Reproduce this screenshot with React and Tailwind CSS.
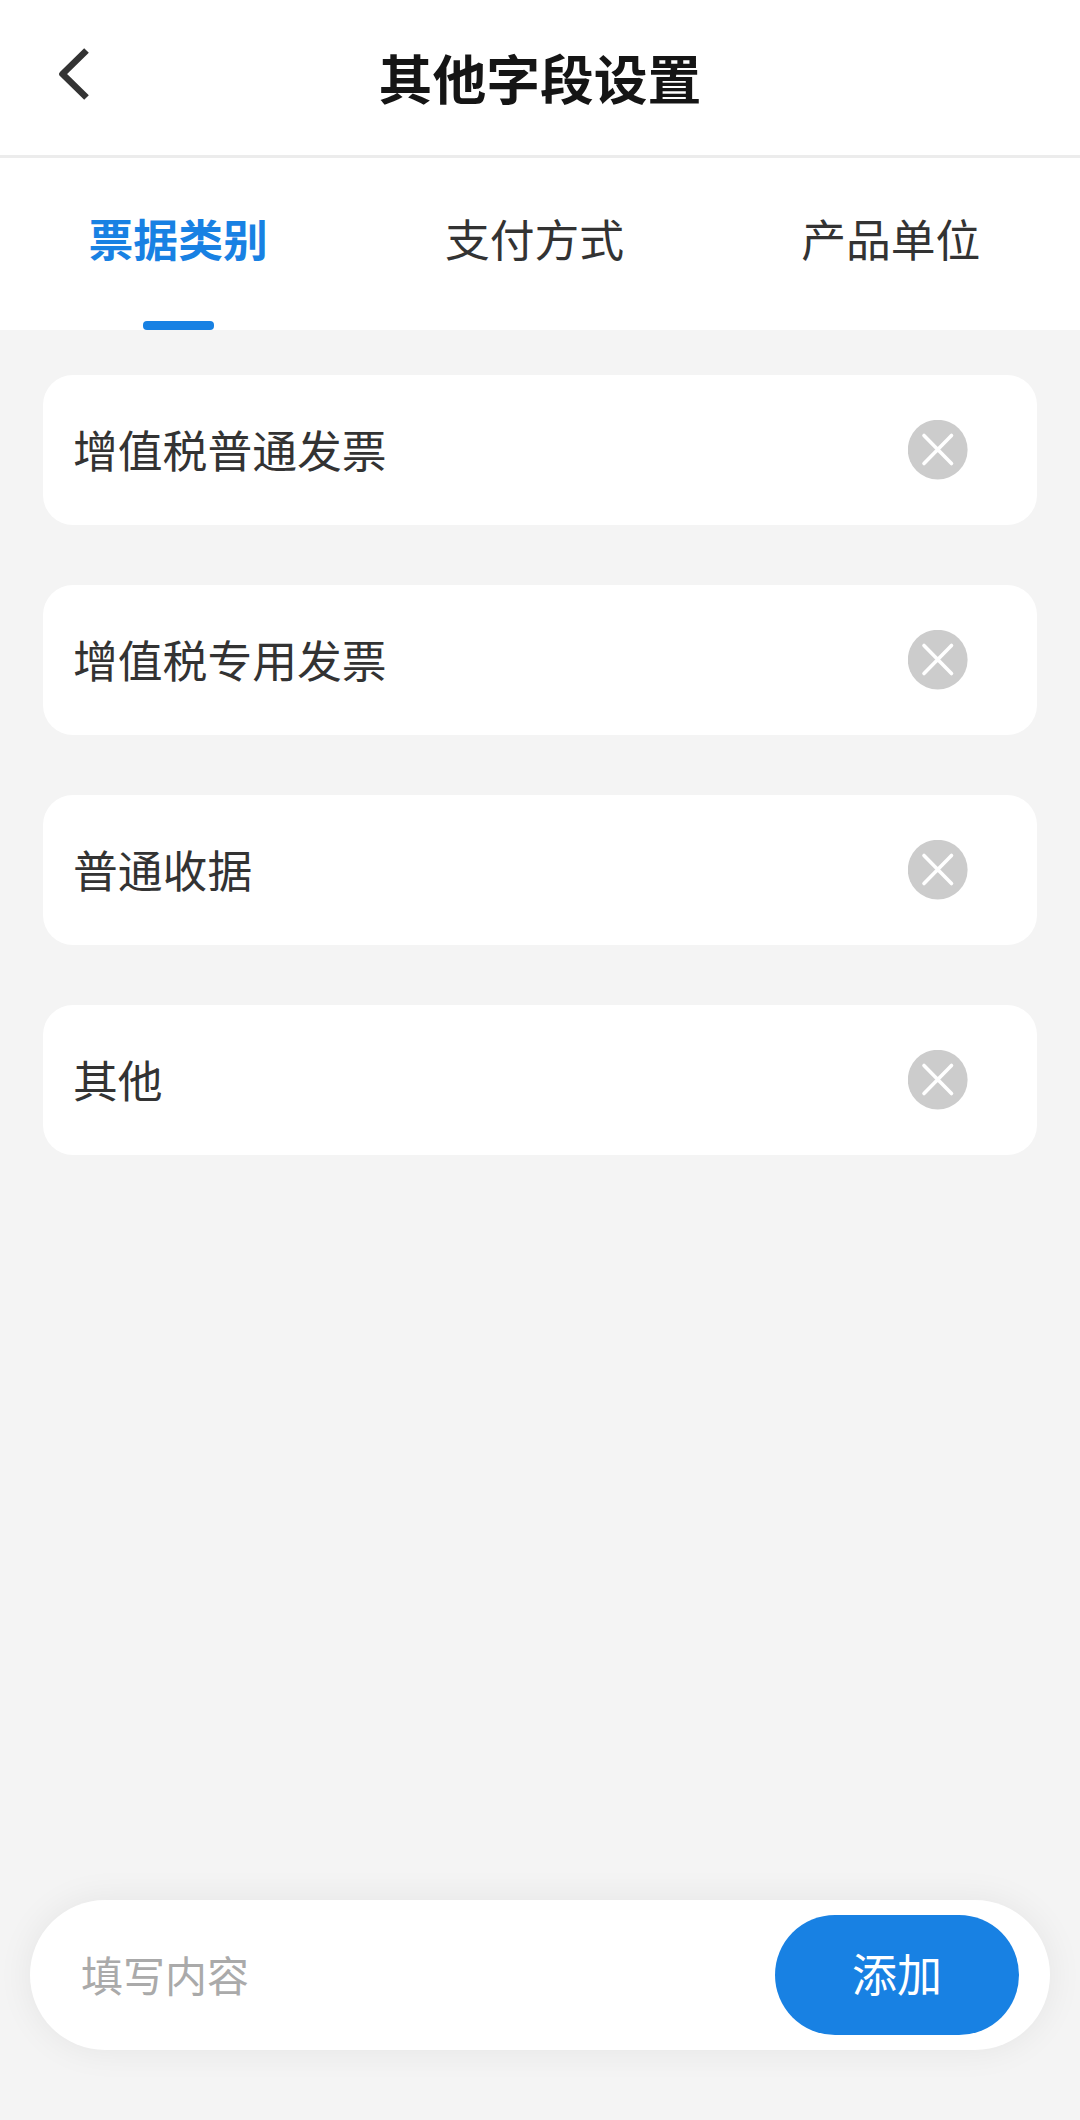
import React, { useState } from 'react';

const TABS = ['票据类别', '支付方式', '产品单位'];

const INITIAL_ITEMS = ['增值税普通发票', '增值税专用发票', '普通收据', '其他'];

function BackIcon() {
  return (
    <svg width="34" height="56" viewBox="0 0 34 56" fill="none">
      <path d="M29.5 4.5L5.5 28L29.5 51.5" stroke="#333" strokeWidth="6.6" strokeLinejoin="round" />
    </svg>
  );
}

function RemoveIcon() {
  return (
    <svg width="60" height="60" viewBox="0 0 60 60" fill="none">
      <circle cx="29.7" cy="29.7" r="29.9" fill="#ccc" />
      <path d="M16 15.5L43.5 43.5M43.5 15.5L16 43.5" stroke="#fff" strokeWidth="3.6" strokeLinecap="round" />
    </svg>
  );
}

export default function App() {
  const [active, setActive] = useState(0);
  const [items, setItems] = useState(INITIAL_ITEMS);
  const [value, setValue] = useState('');

  const handleAdd = (e) => {
    e.preventDefault();
    if (!value.trim()) return;
    setItems([...items, value.trim()]);
    setValue('');
  };

  return (
    <div className="flex h-[2120px] w-[1080px] flex-col bg-[#f4f4f4] font-['Noto_Sans_CJK_SC',sans-serif] text-[#333]">
      <header className="grid h-[158px] grid-cols-[160px_1fr_160px] items-center border-b-3 border-[#ececec] bg-white">
        <button className="pl-[57px] pb-[8px]">
          <BackIcon />
        </button>
        <h1 className="text-center text-[53.8px] font-bold text-[#151515]">其他字段设置</h1>
      </header>

      <nav className="flex h-[172px] bg-white pr-[11px]">
        {TABS.map((tab, i) => (
          <button
            key={tab}
            onClick={() => setActive(i)}
            className={`flex flex-1 flex-col items-center justify-between pt-[47px] text-[44.8px] leading-[66px] ${
              i === active ? 'font-bold text-[#1881e3]' : ''
            }`}
          >
            {tab}
            {i === active && <span className="h-[9px] w-[71px] rounded-[4px] bg-[#1881e3]" />}
          </button>
        ))}
      </nav>

      <ul className="flex flex-1 flex-col gap-[60px] px-[43px] pt-[45px]">
        {items.map((item, i) => (
          <li key={i} className="flex h-[150px] items-center justify-between rounded-[30px] bg-white pl-[30px] pr-[69px]">
            <span className="pb-[3px] text-[44.8px]">{item}</span>
            <button onClick={() => setItems(items.filter((_, n) => n !== i))}>
              <RemoveIcon />
            </button>
          </li>
        ))}
      </ul>

      <form
        onSubmit={handleAdd}
        className="mx-[30px] mb-[70px] flex h-[150px] items-center rounded-full bg-white pl-[51px] pr-[31px] shadow-[0_0_36px_rgba(0,0,0,0.065)]"
      >
        <input
          value={value}
          onChange={(e) => setValue(e.target.value)}
          placeholder="填写内容"
          className="min-w-0 flex-1 pb-[3px] text-[42px] outline-none placeholder:text-[#aaa]"
        />
        <button className="h-[120px] w-[244px] rounded-full bg-[#1881e3] pb-[5px] text-[45px] text-white">添加</button>
      </form>
    </div>
  );
}
